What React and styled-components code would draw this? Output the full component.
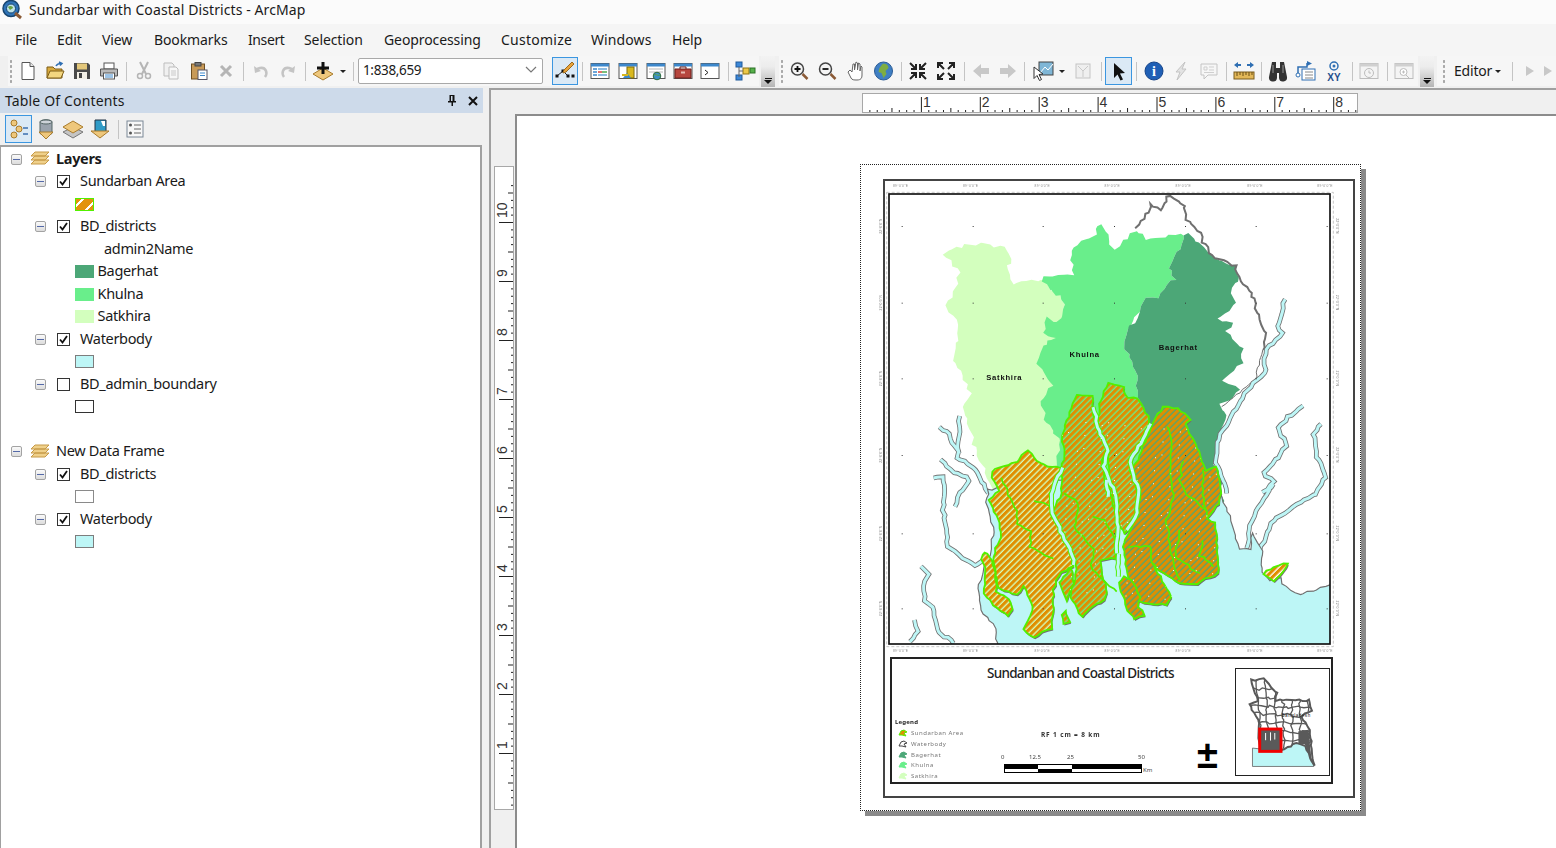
import React from 'react';
import styled, { createGlobalStyle } from 'styled-components';

const GlobalStyle = createGlobalStyle`
  html, body { margin: 0; padding: 0; background: #f0f0f0; }
  * { box-sizing: border-box; }
  body { font-family: "Noto Sans", "Open Sans", "Liberation Sans", sans-serif; color: #1a1a1a; }
`;

const Root = styled.div`
  width: 1556px;
  height: 848px;
  display: flex;
  flex-direction: column;
  overflow: hidden;
  background: #f0f0f0;
`;

const TitleBar = styled.div`
  height: 24px;
  display: flex;
  align-items: center;
  gap: 7px;
  padding: 0 0 5px 2px;
  background: #fbfbfb;
  font-size: 14px;
  letter-spacing: 0.09px;
`;

const MenuBar = styled.div`
  height: 32px;
  display: flex;
  align-items: center;
  padding: 0 0 2px 15px;
  background: #f5f5f5;
  font-size: 14px;
`;

const MenuItem = styled.span`
  width: ${p => p.$w}px;
  letter-spacing: ${p => p.$ls || -0.1}px;
`;

const ToolRow = styled.div`
  height: 32px;
  display: flex;
  align-items: flex-start;
  padding-left: 8px;
  background: #f0f0f0;
`;

const Band = styled.div`
  display: flex;
  align-items: center;
  height: 30px;
  background: #f6f6f6;
  margin-left: ${p => p.$ml || 0}px;
  flex: ${p => (p.$grow ? 1 : 'none')};
`;

const Grip = styled.span`
  width: 6px;
  height: 24px;
  background-image: radial-gradient(circle, #a8a8a8 1.1px, transparent 1.3px);
  background-size: 6px 5px;
  flex: none;
  margin-left: ${p => p.$ml || 0}px;
`;

const ToolBtn = styled.span`
  width: ${p => p.$w || 28}px;
  height: 28px;
  flex: none;
  display: flex;
  align-items: center;
  justify-content: center;
  border: 1px solid ${p => (p.$active ? '#3b96e0' : 'transparent')};
  background: ${p => (p.$active ? '#dbe9f5' : 'transparent')};
`;

const Sep = styled.span`
  width: ${p => p.$w || 6}px;
  height: 24px;
  flex: none;
  position: relative;
  &::after {
    content: '';
    position: absolute;
    left: 50%;
    top: 3px;
    bottom: 2px;
    width: 1px;
    background: #c4c4c4;
  }
`;

const Gap = styled.span`
  width: ${p => p.$w}px;
  flex: none;
`;

const Caret = styled.span`
  width: ${p => p.$w || 10}px;
  flex: none;
  display: flex;
  justify-content: center;
  &::after {
    content: '';
    border-left: 3px solid transparent;
    border-right: 3px solid transparent;
    border-top: 3px solid #222;
  }
`;

const ScaleCombo = styled.div`
  width: 185px;
  height: 26px;
  flex: none;
  margin-right: 9px;
  display: flex;
  align-items: center;
  justify-content: space-between;
  padding: 0 5px 3px 4px;
  background: #fff;
  border: 1px solid #a9a9a9;
  border-radius: 2px;
  font-size: 13.5px;
  letter-spacing: -0.35px;
`;

const Overflow = styled.span`
  width: 14px;
  height: 31px;
  flex: none;
  margin-left: ${p => p.$ml || 0}px;
  display: flex;
  flex-direction: column;
  align-items: center;
  justify-content: flex-end;
  gap: 1px;
  padding-bottom: 3px;
  background: linear-gradient(#f3f3f3, #ececec 35%, #b4b4b4);
  &::before { content: ''; width: 7px; height: 1px; background: #111; }
  &::after {
    content: '';
    border-left: 4px solid transparent;
    border-right: 4px solid transparent;
    border-top: 4px solid #111;
  }
`;

const EditorLabel = styled.span`
  display: flex;
  align-items: center;
  gap: 3px;
  margin-left: 7px;
  padding-bottom: 2px;
  font-size: 14px;
  letter-spacing: -0.2px;
  &::after {
    content: '';
    margin-top: 2px;
    border-left: 3px solid transparent;
    border-right: 3px solid transparent;
    border-top: 3px solid #222;
  }
`;

const Main = styled.div`
  flex: 1;
  display: flex;
  min-height: 0;
`;

const TocPanel = styled.section`
  width: 483px;
  flex: none;
  display: flex;
  flex-direction: column;
`;

const TocHeader = styled.header`
  height: 25px;
  flex: none;
  display: flex;
  align-items: center;
  justify-content: space-between;
  padding: 0 4px 0 5px;
  background: #cddaea;
  font-size: 14px;
  letter-spacing: 0.15px;
`;

const HeaderIcons = styled.span`
  display: flex;
  align-items: center;
  gap: 9px;
`;

const TocTools = styled.div`
  height: 32px;
  flex: none;
  display: flex;
  align-items: center;
  padding-left: 5px;
  background: #f0f0f0;
`;

const Tree = styled.div`
  flex: 1;
  padding-top: 1px;
  margin-right: 1px;
  background: #fff;
  border: 1px solid #a0a0a0;
  border-width: 2px 2px 0 1px;
  font-size: 14.5px;
  letter-spacing: -0.33px;
`;

const Row = styled.div`
  height: 22.5px;
  display: flex;
  align-items: center;
  padding-left: ${p => p.$indent}px;
  font-weight: ${p => (p.$bold ? 700 : 400)};
`;

const RowLabel = styled.span`
  padding-bottom: 3px;
`;

const MinusBox = styled.span`
  width: 11px;
  height: 11px;
  flex: none;
  margin-right: ${p => p.$mr}px;
  display: flex;
  align-items: center;
  justify-content: center;
  border: 1px solid #a3a3a3;
  border-radius: 2px;
  background: linear-gradient(#fafafa, #dcdcdc);
  &::after { content: ''; width: 7px; height: 1px; background: #5469a8; }
`;

const CheckBox = styled.span`
  width: 13px;
  height: 13px;
  flex: none;
  margin-right: 10px;
  display: flex;
  align-items: center;
  justify-content: center;
  border: 1px solid #333;
  background: #fff;
`;

const Swatch = styled.span`
  width: 19px;
  height: 13px;
  flex: none;
  margin-right: 3.5px;
  background: ${p => p.$bg || '#fff'};
  border: ${p => (p.$line ? `1.5px solid ${p.$line}` : 'none')};
  ${p => p.$hatch && `
    background: repeating-linear-gradient(135deg, #e3930c 0 4px, #fff 4px 6px, #e3930c 6px 10px);
  `}
`;

const ViewArea = styled.div`
  flex: 1;
  margin-left: 6px;
  display: grid;
  grid-template-columns: 24px 1fr;
  grid-template-rows: 24px 1fr;
  border: 2px solid #a0a0a0;
  border-width: 2px 0 0 2px;
`;

const HRulerSlot = styled.div`
  grid-column: 2;
  grid-row: 1;
  padding: 3px 0 0 347px;
`;

const VRulerSlot = styled.div`
  grid-column: 1;
  grid-row: 2;
  padding: 52px 0 0 3px;
`;

const Canvas = styled.div`
  grid-column: 2;
  grid-row: 2;
  position: relative;
  background: #fff;
  border: 2px solid #8c8c8c;
  border-width: 2px 0 0 2px;
`;

const Sheet = styled.div`
  position: absolute;
  left: 343px;
  top: 48px;
  width: 501px;
  height: 647px;
  padding: 14px 6px 0 22px;
  background: #fff;
  border: 1px dotted #222;
  box-shadow: 5px 5px 0 #8a8a8a;
`;

const Neatline = styled.div`
  width: 472px;
  height: 619px;
  border: 2px solid #444;
  display: flex;
  flex-direction: column;
`;

const MapDrawing = styled.svg`
  display: block;
  width: 468px;
  height: 474px;
  flex: none;
  overflow: visible;
  filter: blur(0.25px);
`;

const LegendBox = styled.div`
  position: relative;
  width: 443px;
  height: 127px;
  margin: 2px 0 0 5px;
  border: 2px solid #222;
`;

const MapTitle = styled.div`
  position: absolute;
  left: 95px;
  top: 5px;
  font-size: 13.5px;
  font-weight: 500;
  letter-spacing: -0.72px;
  white-space: nowrap;
  color: #222;
`;

const Legend = styled.div`
  position: absolute;
  left: 3px;
  top: 58px;
  display: flex;
  flex-direction: column;
  font-size: 6px;
  color: #777;
  letter-spacing: 0.5px;
  filter: blur(0.25px);
`;

const LegendTitle = styled.b`
  color: #222;
  line-height: 11px;
  font-size: 6px;
  letter-spacing: 0.2px;
`;

const LegendRow = styled.span`
  display: flex;
  align-items: center;
  gap: 3px;
  height: 10.7px;
  padding-left: 3px;
`;

const ScaleText = styled.div`
  position: absolute;
  left: 149px;
  top: 71px;
  font-size: 6.5px;
  font-weight: 700;
  letter-spacing: 0.85px;
  color: #333;
  white-space: nowrap;
  filter: blur(0.2px);
`;

const ScaleLabels = styled.div`
  position: absolute;
  left: 109px;
  top: 94px;
  width: 160px;
  height: 10px;
  font-size: 6px;
  color: #444;
  filter: blur(0.2px);
`;

const ScaleLabel = styled.span`
  position: absolute;
  left: ${p => p.$x}px;
`;

const ScaleBar = styled.div`
  position: absolute;
  left: 112px;
  top: 105px;
  width: 138px;
  height: 9px;
  display: grid;
  grid-template-columns: 33px 34px 69px;
  grid-template-rows: 1fr 1fr;
  border: 1px solid #000;
`;

const BarCell = styled.span`
  background: ${p => (p.$dark ? '#000' : '#fff')};
`;

const KmLabel = styled.span`
  position: absolute;
  left: 251px;
  top: 107px;
  font-size: 6px;
  color: #444;
`;

const NorthArrow = styled.span`
  position: absolute;
  left: 305px;
  top: 76px;
  font-family: "Liberation Sans", sans-serif;
  font-size: 38px;
  line-height: 40px;
  font-weight: 700;
  color: #000;
`;

const Inset = styled.svg`
  position: absolute;
  left: 343px;
  top: 9px;
  width: 95px;
  height: 108px;
  border: 1.5px solid #222;
`;

const HEX = { orange: '#e08e00', green: '#52f000', kh: '#69ee8b', sat: '#d3ffbe', bag: '#4ca777', sea: '#bdf6f6', line: '#707070' };

const Ico = ({ children, w = 20, h = 20, view = '0 0 20 20' }) => (
  <svg width={w} height={h} viewBox={view} style={{ display: 'block', flex: 'none' }}>{children}</svg>
);

const WindowBase = ({ children }) => (
  <>
    <rect x="1" y="2.500" width="18" height="15" fill="#fff" stroke="#555" />
    <rect x="1" y="2.500" width="18" height="3" fill="#3d88cc" />
    {children}
  </>
);

const icons = {
  newDoc: <Ico><path d="M4 1.500h8l4 4v13H4z" fill="#fff" stroke="#555" /><path d="M12 1.500v4h4" fill="#e8e8e8" stroke="#555" /></Ico>,
  open: <Ico><path d="M2 6h6l2 2h7v9H2z" fill="#d9aa3e" stroke="#7d5d16" /><path d="M2 17l3-7h14l-3 7z" fill="#f3d680" stroke="#7d5d16" /><path d="M11 5c1-2 3-2.500 5-2.500M14 1l3 1.500-2 2" fill="none" stroke="#2f6fb3" strokeWidth="1.500" /></Ico>,
  save: <Ico><path d="M2 2h14l2 2v14H2z" fill="#4a4a4a" /><rect x="5" y="2.500" width="10" height="6" fill="#e3c77a" /><rect x="5" y="11" width="10" height="7" fill="#f2efe6" /><rect x="7" y="12" width="3" height="5" fill="#444" /></Ico>,
  print: <Ico><rect x="5" y="2" width="10" height="6" fill="#fff" stroke="#555" /><path d="M1.500 8h17v7h-17z" fill="#b9b9b9" stroke="#555" /><rect x="4.500" y="12" width="11" height="6" fill="#fff" stroke="#555" /><path d="M6 14h8M6 16h8" stroke="#3d88cc" /></Ico>,
  cut: <Ico><path d="M6 1l6 12M14 1L8 13" stroke="#b5b5b5" strokeWidth="2" /><circle cx="6" cy="15" r="2.500" fill="none" stroke="#b5b5b5" strokeWidth="1.500" /><circle cx="14" cy="15" r="2.500" fill="none" stroke="#b5b5b5" strokeWidth="1.500" /></Ico>,
  copy: <Ico><path d="M3 2h8l2 2v11H3z" fill="#f0f0f0" stroke="#bdbdbd" /><path d="M8 6h7l2 2v10H8z" fill="#f7f7f7" stroke="#bdbdbd" /><path d="M10 10h5M10 12h5M10 14h5" stroke="#c9c9c9" /></Ico>,
  paste: <Ico><rect x="2.500" y="3" width="13" height="15" fill="#c89a58" stroke="#6e4f22" /><rect x="6" y="1.500" width="6" height="3.500" fill="#777" stroke="#444" /><rect x="9" y="9" width="9" height="9.500" fill="#fff" stroke="#556" /><path d="M11 12h5M11 14.500h5" stroke="#3d88cc" /></Ico>,
  del: <Ico><path d="M5 5l10 10M15 5L5 15" stroke="#b5b5b5" strokeWidth="3" /></Ico>,
  undo: <Ico><path d="M14 16c3-4 1-10-5-9L6 8" fill="none" stroke="#c4c4c4" strokeWidth="2.500" /><path d="M3 5l1 7 6-2z" fill="#c4c4c4" /></Ico>,
  redo: <Ico><path d="M6 16C3 12 5 6 11 7l3 1" fill="none" stroke="#c4c4c4" strokeWidth="2.500" /><path d="M17 5l-1 7-6-2z" fill="#c4c4c4" /></Ico>,
  addData: <Ico w={22} h={22} view="0 0 22 22"><path d="M11 8l10 6-10 6-10-6z" fill="#eec77c" stroke="#a97c2c" /><path d="M11 2v12M5 8h12" stroke="#111" strokeWidth="3" /></Ico>,
  editTool: <Ico w={22} h={22} view="0 0 22 22"><path d="M3 16l6-5 5 5" stroke="#222" fill="none" /><rect x="1.500" y="14.500" width="3" height="3" fill="#111" /><rect x="7.500" y="9.500" width="3" height="3" fill="#111" /><rect x="12.500" y="14.500" width="3" height="3" fill="#111" /><rect x="17.500" y="14.500" width="3" height="3" fill="#111" /><path d="M10 10l8-8 2 2-8 8-3 1z" fill="#e8a33c" stroke="#9c6a1c" /></Ico>,
  tableWin: <Ico><WindowBase /><path d="M3 8h4M3 11h4M3 14h4" stroke="#3d88cc" strokeWidth="1.500" /><path d="M8 8h9M8 14h9" stroke="#6aa6d8" strokeWidth="1.500" /><path d="M8 11h4" stroke="#d8413c" strokeWidth="1.500" /><path d="M12 11h5" stroke="#4eaa4e" strokeWidth="1.500" /></Ico>,
  catalog: <Ico><WindowBase /><rect x="9" y="6" width="7" height="11" fill="#d9b81e" stroke="#7d6a0c" /><path d="M5 17l4-5 4 5z" fill="#3d88cc" /><path d="M4 14h6" stroke="#d9b81e" strokeWidth="2" /></Ico>,
  searchWin: <Ico><WindowBase><path d="M3 8h14M3 11h14" stroke="#b8b8b8" /><circle cx="11" cy="15" r="3.800" fill="#3d8fc7" stroke="#2d6b3a" /><path d="M8 14c2-1 4 1 6 0" stroke="#62b04a" /></WindowBase></Ico>,
  toolbox: <Ico><WindowBase /><path d="M2 8h16v9H2z" fill="#b6463e" stroke="#6e1e1a" /><path d="M7 8V6h6v2" fill="none" stroke="#6e1e1a" /><rect x="8" y="10.500" width="4" height="2" fill="#e7b9b0" /></Ico>,
  python: <Ico><WindowBase><path d="M5 9l3 2.500L5 14" fill="none" stroke="#222" /></WindowBase></Ico>,
  model: <Ico w={22} h={22} view="0 0 22 22"><rect x="2" y="2" width="6" height="5" fill="#3d88d8" stroke="#1f5a9c" /><rect x="2" y="15" width="6" height="5" fill="#3d88d8" stroke="#1f5a9c" /><rect x="9" y="8" width="6" height="6" fill="#ebc84a" stroke="#8f7315" /><rect x="16" y="8" width="5" height="5" fill="#55b04a" stroke="#2d7026" /><path d="M5 7v10M5 11h4" stroke="#666" /></Ico>,
  zoomIn: <Ico><circle cx="8.500" cy="8" r="6" fill="#f4f4f4" stroke="#444" strokeWidth="1.500" /><path d="M5.500 8h6M8.500 5v6" stroke="#111" strokeWidth="1.800" /><path d="M13.500 13l5 5" stroke="#8a5a36" strokeWidth="2.500" /></Ico>,
  zoomOut: <Ico><circle cx="8.500" cy="8" r="6" fill="#f4f4f4" stroke="#444" strokeWidth="1.500" /><path d="M5.500 8h6" stroke="#111" strokeWidth="1.800" /><path d="M13.500 13l5 5" stroke="#8a5a36" strokeWidth="2.500" /></Ico>,
  pan: <Ico><path d="M3 11l3 6c1 2 3 2 6 2 4 0 5-2 5-5V6l-1-1-1 5V3l-1.500-1-1 7V2L11 1 9.500 9V3L8 3 7 11 5 9z" fill="#fff" stroke="#666" /></Ico>,
  globe: <Ico><circle cx="10.500" cy="10" r="9" fill="#3f7fc4" stroke="#2a5b94" /><path d="M9.500 3c4-1 6 2 6 4l-3 3 1 3-3 4-2-5-3-1 1-4z" fill="#7ead42" /></Ico>,
  fixedIn: <Ico><path d="M2 2l6 6M8 3v5H3M18 2l-6 6M12 3v5h5M2 18l6-6M8 17v-5H3M18 18l-6-6M12 17v-5h5" stroke="#222" strokeWidth="2" fill="none" /></Ico>,
  fixedOut: <Ico><path d="M8 8L2 2M2 7V2h5M12 8l6-6M18 7V2h-5M8 12l-6 6M2 13v5h5M12 12l6 6M18 13v5h-5" stroke="#222" strokeWidth="2" fill="none" /></Ico>,
  back: <Ico><path d="M2 10l8-7v4h8v6h-8v4z" fill="#c8c8c8" /></Ico>,
  fwd: <Ico><path d="M18 10l-8-7v4H2v6h8v4z" fill="#c8c8c8" /></Ico>,
  selectEl: <Ico w={22} h={22} view="0 0 22 22"><rect x="7" y="2" width="14" height="13" fill="#7fb6d6" stroke="#444" /><path d="M8 13l5-6 3 3 5-6" stroke="#fff" fill="none" /><path d="M2 7l9 7-4 .5 2.500 5-2 1-2.500-5-3 3z" fill="#fff" stroke="#333" /></Ico>,
  pale: <Ico w={16} h={16} view="0 0 16 16"><rect x="1" y="1" width="14" height="14" fill="#efefef" stroke="#c4c4c4" /><path d="M3 3l5 5 5-5M8 8v6" stroke="#c9c9c9" fill="none" /></Ico>,
  arrow: <Ico><path d="M5 2l11 10-5 .5 3 6-2.500 1-3-6L5 17z" fill="#111" /></Ico>,
  info: <Ico><circle cx="10" cy="10" r="9" fill="#1f5fb5" stroke="#16458a" /><text x="10" y="15" textAnchor="middle" fontSize="14" fontWeight="700" fontFamily="Liberation Serif, serif" fill="#fff">i</text></Ico>,
  bolt: <Ico><path d="M14 1L5 11h4l-3 8 9-11h-4z" fill="#e3e3e3" stroke="#c4c4c4" /></Ico>,
  popup: <Ico><path d="M2 3h16v11h-9l-4 4v-4H2z" fill="#f6f6f6" stroke="#c4c4c4" /><path d="M5 6h3v3H5zM10 6h5M10 9h5M5 11.500h10" stroke="#cfcfcf" fill="none" /></Ico>,
  measure: <Ico w={22} h={22} view="0 0 22 22"><path d="M1 5l4-3v2h3v2H5v2zM21 5l-4-3v2h-3v2h3v2z" fill="#2f6fb3" /><rect x="1" y="12" width="20" height="7" fill="#e2b758" stroke="#7a5c1c" /><path d="M4 12v4M7 12v3M10 12v4M13 12v3M16 12v4M19 12v3" stroke="#6b4f14" /></Ico>,
  find: <Ico w={22} h={22} view="0 0 22 22"><path d="M5 2h4v6h4V2h4l3 15a3 3 0 0 1-8 1v-5H10v5a3 3 0 0 1-8-1z" fill="#333" /><path d="M6 5v8M16 5v8" stroke="#999" /></Ico>,
  route: <Ico w={22} h={22} view="0 0 22 22"><rect x="7" y="9" width="13" height="11" fill="#fff" stroke="#2f6fb3" /><path d="M10 12h8M10 15h8M10 18h8" stroke="#888" /><path d="M3 14V7h9V3" fill="none" stroke="#2f6fb3" strokeWidth="1.500" /><circle cx="3" cy="15" r="2" fill="#fff" stroke="#2f6fb3" /><path d="M12 1l5 2.500-5 2.500z" fill="#2f6fb3" /></Ico>,
  xy: <Ico w={22} h={22} view="0 0 22 22"><circle cx="11" cy="6" r="4" fill="none" stroke="#2f6fb3" strokeWidth="1.500" /><circle cx="11" cy="6" r="1.500" fill="#2f6fb3" /><text x="11" y="20.500" textAnchor="middle" fontSize="10" fontWeight="700" fontFamily="Liberation Sans, sans-serif" fill="#1f4f8c">XY</text></Ico>,
  time: <Ico><rect x="1" y="2.500" width="18" height="15" fill="#f4f4f4" stroke="#bdbdbd" /><rect x="1" y="2.500" width="18" height="3" fill="#d0d0d0" /><circle cx="10" cy="12" r="4.500" fill="none" stroke="#bdbdbd" /><path d="M10 9.500V12h2" stroke="#bdbdbd" fill="none" /></Ico>,
  viewer: <Ico><rect x="1" y="2.500" width="18" height="15" fill="#f4f4f4" stroke="#bdbdbd" /><rect x="1" y="2.500" width="18" height="3" fill="#d0d0d0" /><circle cx="9.500" cy="11" r="3.500" fill="#fff" stroke="#bdbdbd" /><path d="M8 11h3M9.500 9.500v3M12 14l3 3" stroke="#bdbdbd" /></Ico>,
  play: <Ico w={14} h={14} view="0 0 14 14"><path d="M3 2l8 5-8 5z" fill="#c8c8c8" /></Ico>,
};

const tocIcons = {
  tree: <Ico><circle cx="5" cy="4" r="3" fill="#eec77c" stroke="#a97c2c" /><circle cx="10" cy="10" r="3" fill="#eec77c" stroke="#a97c2c" /><circle cx="5" cy="16" r="3" fill="#eec77c" stroke="#a97c2c" /><path d="M14 9h5M14 15h5" stroke="#3d6fae" strokeWidth="1.500" /></Ico>,
  db: <Ico w={22} h={22} view="0 0 22 22"><path d="M5 4c0-3 12-3 12 0v11c0 3-12 3-12 0z" fill="#9aa3ad" stroke="#566" /><ellipse cx="11" cy="4" rx="6" ry="2" fill="#cdd3d9" stroke="#566" /><path d="M4 14h14l-7 7z" fill="#eec77c" stroke="#a97c2c" /></Ico>,
  stack: <Ico w={22} h={22} view="0 0 22 22"><path d="M11 9l10 5-10 6-10-6z" fill="#c4c4c4" stroke="#777" /><path d="M11 3l10 6-10 6L1 9z" fill="#eec77c" stroke="#a97c2c" /></Ico>,
  source: <Ico w={22} h={22} view="0 0 22 22"><path d="M6 2h11v12H6z" fill="#2f9bc7" stroke="#234" /><path d="M12 3h4v5h-2z" fill="#fff" /><path d="M2 13h18l-9 7z" fill="#eec77c" stroke="#a97c2c" /></Ico>,
  list: <Ico><rect x="2" y="2" width="16" height="16" fill="#f7f7f7" stroke="#7a8796" /><circle cx="5.500" cy="6" r="1.500" fill="#555" /><circle cx="5.500" cy="14" r="1.500" fill="#555" /><path d="M9 6h7M9 10h7M9 14h7" stroke="#666" /></Ico>,
};

const LayersIcon = () => (
  <Ico view="0 0 20 16" h={16} w={20}>
    <path d="M5 1h14l-4 4H1zM5 5h14l-4 4H1zM5 9h14l-4 4H1z" fill="#efd08a" stroke="#c69a48" />
  </Ico>
);

const tools1 = [
  ['b', 'newDoc', 27], ['b', 'open', 27], ['b', 'save', 27], ['b', 'print', 27], ['s', 8],
  ['b', 'cut', 27], ['b', 'copy', 28], ['b', 'paste', 27], ['b', 'del', 27], ['s', 8],
  ['b', 'undo', 27], ['b', 'redo', 28], ['s', 6], ['b', 'addData', 30], ['c', 10], ['s', 10],
];
const tools2 = [
  ['a', 'editTool', 26], ['s', 8], ['b', 'tableWin', 28], ['b', 'catalog', 28], ['b', 'searchWin', 27],
  ['b', 'toolbox', 27], ['b', 'python', 28], ['s', 7], ['b', 'model', 28],
];
const tools3 = [
  ['b', 'zoomIn', 28], ['b', 'zoomOut', 28], ['b', 'pan', 28], ['b', 'globe', 28], ['s', 7],
  ['b', 'fixedIn', 28], ['b', 'fixedOut', 28], ['s', 7], ['b', 'back', 27], ['b', 'fwd', 27], ['s', 6],
  ['b', 'selectEl', 32], ['c', 6], ['g', 4], ['b', 'pale', 28], ['s', 8], ['a', 'arrow', 27], ['s', 8],
  ['b', 'info', 27], ['b', 'bolt', 28], ['b', 'popup', 27], ['s', 8], ['b', 'measure', 28], ['s', 6],
  ['b', 'find', 28], ['b', 'route', 28], ['b', 'xy', 28], ['s', 7], ['b', 'time', 28], ['s', 7], ['b', 'viewer', 28],
];

const renderTools = list => list.map((t, i) => {
  if (t[0] === 's') return <Sep key={i} $w={t[1]} />;
  if (t[0] === 'c') return <Caret key={i} $w={t[1]} />;
  if (t[0] === 'g') return <Gap key={i} $w={t[1]} />;
  return <ToolBtn key={i} $w={t[2]} $active={t[0] === 'a'}>{icons[t[1]]}</ToolBtn>;
});

const Tick = () => (
  <svg width="11" height="11" viewBox="0 0 11 11"><path d="M2 5.500l2.500 3L9 2" fill="none" stroke="#111" strokeWidth="1.800" /></svg>
);

const Layer = ({ name, on = true }) => (
  <Row $indent={34}>
    <MinusBox $mr={11} />
    <CheckBox>{on && <Tick />}</CheckBox>
    <RowLabel>{name}</RowLabel>
  </Row>
);

const Frame = ({ name, bold }) => (
  <Row $indent={10} $bold={bold}>
    <MinusBox $mr={8} />
    <LayersIcon />
    <Gap $w={6} />
    <RowLabel>{name}</RowLabel>
  </Row>
);

const HRuler = () => {
  const step = 58.9 / 8;
  return (
    <svg width="496" height="20" style={{ display: 'block', background: '#fff', border: '1px solid #a8a8a8' }}>
      {Array.from({ length: 68 }, (_, i) => {
        const x = i * step - 1;
        const h = i % 8 === 0 ? 15 : i % 4 === 0 ? 4 : 2;
        return <rect key={i} x={x} y={18 - h} width="1" height={h} fill="#222" />;
      })}
      {[1, 2, 3, 4, 5, 6, 7, 8].map(n => (
        <text key={n} x={n * 58.9 + 1} y="13" fontSize="14" fontFamily="Liberation Sans, sans-serif" fill="#333">{n}</text>
      ))}
    </svg>
  );
};

const VRuler = () => {
  const step = 59 / 8;
  const zero = 645;
  return (
    <svg width="20" height="644" style={{ display: 'block', background: '#fff', border: '1px solid #a8a8a8' }}>
      {Array.from({ length: 86 }, (_, i) => {
        const y = zero - i * step;
        const w = i % 8 === 0 ? 14 : i % 4 === 0 ? 5 : 2;
        return <rect key={i} x={18 - w} y={y} width={w} height="1" fill="#222" />;
      })}
      {[1, 2, 3, 4, 5, 6, 7, 8, 9, 10].map(n => {
        const y = zero - n * 59 - 4;
        return <text key={n} transform={`translate(12 ${y}) rotate(-90)`} fontSize="14" fontFamily="Liberation Sans, sans-serif" fill="#333">{n}</text>;
      })}
    </svg>
  );
};

// roughens a point list so coasts read as jagged raster edges
const noise = (x, y) => {
  const v = Math.sin(x * 12.9898 + y * 78.233) * 43758.5453;
  return v - Math.floor(v) - 0.5;
};

const jag = (pts, amp = 5, step = 15, closed = true) => {
  const list = pts.trim().split(/\s+/).map(p => p.split(',').map(Number));
  const out = [];
  const count = closed ? list.length : list.length - 1;
  for (let i = 0; i < count; i++) {
    const [ax, ay] = list[i];
    const [bx, by] = list[(i + 1) % list.length];
    const n = Math.max(1, Math.round(Math.hypot(bx - ax, by - ay) / step));
    for (let k = 0; k < n; k++) {
      const x = ax + ((bx - ax) * k) / n;
      const y = ay + ((by - ay) * k) / n;
      out.push(`${(x + noise(x, y) * amp * 2).toFixed(1)},${(y + noise(y, x) * amp * 2).toFixed(1)}`);
    }
  }
  if (!closed) out.push(list[list.length - 1].join(','));
  return out.join(' ');
};

// map outlines, in 3x pixels from the sheet corner
const P = {
  sat: '250,280 330,250 430,260 455,295 440,330 460,375 545,355 600,410 615,450 600,700 620,960 400,1000 360,900 340,850 310,740 332,700 280,600 300,490 262,440 300,340',
  khu: '710,195 730,195 750,255 770,265 825,210 855,235 975,225 930,320 945,355 890,410 860,410 835,460 800,510 790,560 825,620 840,740 870,790 880,1000 610,1000 590,900 605,840 565,800 540,720 575,680 535,610 545,560 590,530 550,520 560,470 590,490 615,450 600,410 545,370 550,350 640,345 630,270 680,240 705,225',
  bag: '990,220 1060,295 1125,320 1140,350 1110,400 1125,430 1070,475 1120,490 1100,515 1150,570 1145,610 1090,660 1135,690 1110,725 1080,735 1095,770 1070,850 1060,910 1085,960 1090,1040 1060,1080 880,1100 870,790 840,740 825,620 790,560 800,510 830,480 835,460 860,410 890,410 945,355 930,320 975,225',
  sea: '415,1480 405,1405 365,1350 352,1285 375,1220 395,1170 400,1100 380,1030 385,990 600,960 1080,1000 1090,1030 1110,1070 1135,1165 1172,1165 1175,1120 1210,1170 1205,1240 1230,1260 1260,1255 1265,1275 1320,1305 1408,1275 1440,1275 1440,1480',
};

const hatched = [
  { base: HEX.sat, pts: '395,935 470,905 505,870 540,912 605,925 570,1000 590,1080 640,1190 640,1220 595,1245 580,1290 578,1370 575,1405 520,1432 492,1410 520,1340 492,1280 470,1305 415,1285 400,1190 420,1130 420,1090 385,1020 420,990 395,950' },
  { base: HEX.sat, pts: '375,1175 385,1180 405,1240 410,1295 445,1315 458,1350 445,1370 410,1345 370,1300 378,1240 365,1195' },
  { base: HEX.kh, pts: '650,705 695,710 705,790 745,870 728,900 735,960 770,1040 775,1130 768,1195 720,1200 740,1300 735,1320 690,1345 665,1370 630,1310 650,1230 635,1180 575,1060 605,1000 605,925 615,870 605,830 625,770' },
  { base: HEX.kh, pts: '745,670 790,680 800,715 835,715 865,770 870,800 840,860 810,905 835,1000 830,1070 795,1120 775,1090 750,1000 745,880 712,800 720,720' },
  { base: HEX.kh, pts: '610,1250 635,1225 640,1270 620,1320 600,1270' },
  { base: HEX.kh, pts: '615,1350 630,1385 610,1390 605,1365' },
  { base: HEX.bag, pts: '885,770 910,740 955,745 990,780 975,795 1005,850 1035,930 1070,920 1085,1000 1075,1030 1060,1050 1040,1075 1065,1090 1075,1200 1075,1240 1010,1270 990,1270 960,1270 895,1230 880,1215 935,1310 920,1335 840,1325 800,1240 795,1200 790,1150 810,1110 835,1060 840,1000 810,930 835,900 860,830' },
  { base: HEX.bag, pts: '790,1250 815,1260 840,1310 835,1340 855,1365 825,1375 800,1350 795,1320 775,1270' },
  { base: '#fff', pts: '1210,1240 1240,1220 1285,1208 1260,1250 1240,1262' },
];

const channels = [
  '420,955 440,990 470,1055 470,1090 510,1110 510,1160 580,1195',
  '520,1020 580,1040 575,1075',
  '610,1000 650,1020 655,1060 640,1100 700,1165 695,1230 770,1295',
  '700,1070 735,1080 770,1145',
  '925,800 935,870 930,930 940,1000 920,1080 935,1190 960,1260',
  '1030,930 1030,1020 1040,1070',
  '970,900 960,960 980,1000 1040,1050',
  '800,1160 870,1160 880,1215',
  '960,1110 945,1190 1020,1240',
  '1030,1140 1020,1185 1060,1220',
];

// tidal rivers that cut through the hatched land, green banks on both sides
const innerRivers = [
  '702,740 712,800 745,870 732,920 770,1010 772,1100 770,1180',
  '872,790 835,860 808,905 835,990 832,1060 800,1110',
  '606,925 572,1000 578,1060 640,1190 640,1215',
  '738,960 745,1010',
  '775,1180 775,1250',
];

const rivers = [
  '300,770 295,860 290,890 350,930 385,1000',
  '240,800 265,825 298,880',
  '245,895 270,930 330,960 300,1000 285,1040',
  '220,955 250,950 255,1000 250,1050 265,1160 345,1220 380,1190',
  '1275,420 1250,500 1270,520 1215,570 1215,640 1180,670 1110,770 1070,850 1070,905 1100,1000',
  '1325,735 1255,800 1280,860 1260,880 1210,940 1240,965 1210,1000 1240,970 1175,1080 1160,1165',
  '1385,790 1360,820 1370,890 1395,950 1370,1000 1240,1080 1200,1170',
  '185,1220 205,1240 190,1280 195,1320 215,1340 240,1420 280,1450',
  '165,1380 175,1410 150,1445',
];

const boundary = '830,205 855,165 875,130 900,150 920,110 935,105 970,135 980,175 1015,210 1030,245 1065,295 1125,320 1145,365 1185,420 1195,480 1220,520 1210,570';

const columns = [122, 332, 547, 757, 970, 1185, 1395];
const rowsY = [198, 428, 655, 885, 1120, 1345];
const dotX = [125, 338, 548, 762, 975, 1187, 1400];

// white flecks scattered across the hatched land
const flecks = Array.from({ length: 150 }, (_, i) => {
  const a = (i * 7919 + 13) % 761;
  const b = (i * 104729 + 7) % 733;
  return [600 + a * 0.62, 780 + b * 0.75];
});

const MapSheet = () => (
  <MapDrawing viewBox="75 63 1404 1422">
    <defs>
      <pattern id="hatch" patternUnits="userSpaceOnUse" width="13.500" height="13.500" patternTransform="rotate(-45)">
        <rect width="13.500" height="9.500" fill={HEX.orange} />
      </pattern>
      <clipPath id="frameClip"><rect x="87" y="102" width="1323" height="1350" /></clipPath>
      <clipPath id="landClip">{hatched.slice(2, 8).map((h, i) => <polygon key={i} points={h.pts} />)}</clipPath>
    </defs>
    <rect x="80" y="97" width="1340" height="1363" fill="none" stroke="#aaa" strokeWidth="2" strokeDasharray="9 6" />
    {columns.map(x => (
      <g key={x} fontSize="10" fill="#8a8a8a" fontFamily="Liberation Sans, sans-serif" textAnchor="middle" letterSpacing="1">
        <text x={x} y="81">89°0'0"E</text>
        <text x={x} y="1476">89°0'0"E</text>
      </g>
    ))}
    {rowsY.map(y => (
      <g key={y} fontSize="10" fill="#8a8a8a" fontFamily="Liberation Sans, sans-serif" textAnchor="middle" letterSpacing="1">
        <text transform={`translate(66 ${y}) rotate(-90)`}>22°0'0"N</text>
        <text transform={`translate(1428 ${y}) rotate(90)`}>22°0'0"N</text>
      </g>
    ))}
    <rect x="87" y="102" width="1323" height="1350" fill="#fff" />
    <g clipPath="url(#frameClip)">
      <polygon points={jag(P.sat, 6)} fill={HEX.sat} />
      <polygon points={jag(P.khu, 6)} fill={HEX.kh} />
      <polygon points={jag(P.bag, 6)} fill={HEX.bag} />
      <polyline points={jag(boundary, 5, 12, false)} fill="none" stroke={HEX.line} strokeWidth="6" />
      <polyline points={jag('1210,570 1185,660 1085,740', 3, 12, false)} fill="none" stroke={HEX.line} strokeWidth="3" />
      {rivers.map(r => <polyline key={r} points={jag(r, 4, 14, false)} fill="none" stroke={HEX.line} strokeWidth="14" />)}
      {rivers.map(r => <polyline key={r} points={jag(r, 4, 14, false)} fill="none" stroke={HEX.sea} strokeWidth="9" />)}
      <polygon points={jag(P.sea, 4, 14)} fill={HEX.sea} stroke={HEX.line} strokeWidth="3.500" />
      {hatched.map(h => <polygon key={h.pts} points={jag(h.pts, 3, 14)} fill={HEX.line} transform="translate(3 5)" />)}
      {hatched.map(h => (
        <g key={h.pts}>
          <polygon points={jag(h.pts, 3, 14)} fill={h.base} />
          <polygon points={jag(h.pts, 3, 14)} fill="url(#hatch)" stroke={HEX.green} strokeWidth="5.500" />
        </g>
      ))}
      {channels.map(c => <polyline key={c} points={jag(c, 4, 14, false)} fill="none" stroke={HEX.green} strokeWidth="5" />)}
      {innerRivers.map(r => <polyline key={r} points={jag(r, 3, 14, false)} fill="none" stroke={HEX.green} strokeWidth="15" />)}
      {innerRivers.map(r => <polyline key={r} points={jag(r, 3, 14, false)} fill="none" stroke={HEX.sea} strokeWidth="9" />)}
      <g clipPath="url(#landClip)">
        {flecks.map(([x, y], i) => <rect key={i} x={x} y={y} width="3" height="3" fill="#fff" />)}
      </g>
      {dotX.flatMap(x => rowsY.map(y => <rect key={`${x}-${y}`} x={x} y={y} width="3" height="3" fill="#333" />))}
      <g fontFamily="Liberation Sans, sans-serif" fontWeight="700" fontSize="23" letterSpacing="2.200" fill="#111" textAnchor="middle">
        <text x="433" y="659">Satkhira</text>
        <text x="674" y="591">Khulna</text>
        <text x="955" y="569">Bagerhat</text>
      </g>
    </g>
    <rect x="87" y="102" width="1323" height="1350" fill="none" stroke="#111" strokeWidth="5" />
  </MapDrawing>
);

const legendItems = [
  ['Sundarban Area', HEX.orange, HEX.green],
  ['Waterbody', '#fff', '#444'],
  ['Bagerhat', HEX.bag, HEX.bag],
  ['Khulna', HEX.kh, HEX.kh],
  ['Satkhira', HEX.sat, HEX.sat],
];

const LegendBlob = ({ fill, line }) => (
  <svg width="10" height="8" viewBox="0 0 10 8"><path d="M1 6l2-4 3-1 3 2-3 1 2 3-4-1z" fill={fill} stroke={line} /></svg>
);

const insetBody = '1110,90 1150,85 1190,130 1185,150 1290,150 1295,180 1262,200 1290,240 1302,350 1275,290 1250,280 1200,302 1135,300 1135,222 1105,160 1130,150 1120,115';

const InsetMap = () => (
  <Inset viewBox="1065 55 283 323">
    <defs><clipPath id="bdClip"><polygon points={insetBody} /></clipPath></defs>
    <polygon points="1115,296 1200,305 1250,280 1285,290 1302,352 1115,352" fill={HEX.sea} stroke="#666" strokeWidth="2.500" />
    <polygon points={jag(insetBody, 3, 12)} fill="#fff" stroke="#595959" strokeWidth="6" />
    <g clipPath="url(#bdClip)">
      {[115, 140, 165, 190, 215, 240, 265].map(y => (
        <polyline key={y} points={jag(`1100,${y} 1310,${y + 10}`, 5, 12, false)} fill="none" stroke="#595959" strokeWidth="4" />
      ))}
      {[1130, 1155, 1180, 1205, 1230, 1255, 1280].map(x => (
        <polyline key={x} points={jag(`${x},80 ${x + 10},310`, 5, 12, false)} fill="none" stroke="#595959" strokeWidth="4" />
      ))}
      <polygon points="1255,245 1285,240 1296,340 1275,285 1255,282" fill="#5a5a5a" />
    </g>
    <text x="1248" y="201" fontSize="14" letterSpacing="1.500" textAnchor="middle" fontFamily="Liberation Sans, sans-serif" fill="#222">Bangladesh</text>
    <rect x="1139" y="240" width="60" height="62" fill="#5a5a5a" />
    <path d="M1155 250v22M1170 248v25M1183 250v20" stroke="#fff" strokeWidth="3" />
    <rect x="1137" y="238" width="65" height="68" fill="none" stroke="#f00000" strokeWidth="9" />
  </Inset>
);

export default function App() {
  return (
    <Root>
      <GlobalStyle />
      <TitleBar>
        <Ico>
          <circle cx="9" cy="8.500" r="8" fill="#2f74b8" stroke="#17456f" strokeWidth="1.500" />
          <circle cx="9" cy="8.500" r="4.500" fill="#bfe3e8" stroke="#17456f" />
          <path d="M6 7c2-2 5-1 5 1l-3 2z" fill="#68a344" />
          <path d="M13 13l6 5" stroke="#8a5a36" strokeWidth="3" />
        </Ico>
        Sundarbar with Coastal Districts - ArcMap
      </TitleBar>
      <MenuBar>
        <MenuItem $w={42}>File</MenuItem>
        <MenuItem $w={45}>Edit</MenuItem>
        <MenuItem $w={52}>View</MenuItem>
        <MenuItem $w={94}>Bookmarks</MenuItem>
        <MenuItem $w={56} $ls={-0.4}>Insert</MenuItem>
        <MenuItem $w={80}>Selection</MenuItem>
        <MenuItem $w={117}>Geoprocessing</MenuItem>
        <MenuItem $w={90} $ls={0.25}>Customize</MenuItem>
        <MenuItem $w={81} $ls={0.1}>Windows</MenuItem>
        <MenuItem $w={40}>Help</MenuItem>
      </MenuBar>
      <ToolRow>
        <Band>
          <Grip />
          {renderTools(tools1)}
          <ScaleCombo>
            1:838,659
            <svg width="12" height="8" viewBox="0 0 12 8"><path d="M1 1l5 5 5-5" fill="none" stroke="#777" strokeWidth="1.200" /></svg>
          </ScaleCombo>
          {renderTools(tools2)}
        </Band>
        <Overflow $ml={2} />
        <Band $ml={4}>
          <Grip />
          {renderTools(tools3)}
        </Band>
        <Overflow $ml={2} />
        <Band $ml={3} $grow>
          <Grip $ml={4} />
          <EditorLabel>Editor</EditorLabel>
          <Sep $w={22} />
          <ToolBtn $w={14}>{icons.play}</ToolBtn>
          <ToolBtn $w={22}>{icons.play}</ToolBtn>
        </Band>
      </ToolRow>
      <Main>
        <TocPanel>
          <TocHeader>
            Table Of Contents
            <HeaderIcons>
              <svg width="12" height="13" viewBox="0 0 12 13"><path d="M3.500 1h5v6h1.500v1.500H7V12H5.500V8.500H2V7h1.500z M5 2v5h1.500V2z" fill="#111" fillRule="evenodd" /></svg>
              <svg width="12" height="12" viewBox="0 0 12 12"><path d="M2 2l8 8M10 2l-8 8" stroke="#111" strokeWidth="2" /></svg>
            </HeaderIcons>
          </TocHeader>
          <TocTools>
            <ToolBtn $w={27} $active>{tocIcons.tree}</ToolBtn>
            <ToolBtn $w={27}>{tocIcons.db}</ToolBtn>
            <ToolBtn $w={27}>{tocIcons.stack}</ToolBtn>
            <ToolBtn $w={28}>{tocIcons.source}</ToolBtn>
            <Sep $w={7} />
            <ToolBtn $w={28}>{tocIcons.list}</ToolBtn>
          </TocTools>
          <Tree>
            <Frame name="Layers" bold />
            <Layer name="Sundarban Area" />
            <Row $indent={74}><Swatch $hatch $line={HEX.green} /></Row>
            <Layer name="BD_districts" />
            <Row $indent={103}><RowLabel>admin2Name</RowLabel></Row>
            <Row $indent={74}><Swatch $bg={HEX.bag} /><RowLabel>Bagerhat</RowLabel></Row>
            <Row $indent={74}><Swatch $bg={HEX.kh} /><RowLabel>Khulna</RowLabel></Row>
            <Row $indent={74}><Swatch $bg={HEX.sat} /><RowLabel>Satkhira</RowLabel></Row>
            <Layer name="Waterbody" />
            <Row $indent={74}><Swatch $bg={HEX.sea} $line="#7d7d7d" /></Row>
            <Layer name="BD_admin_boundary" on={false} />
            <Row $indent={74}><Swatch $line="#333" /></Row>
            <Row $indent={74} />
            <Frame name="New Data Frame" />
            <Layer name="BD_districts" />
            <Row $indent={74}><Swatch $line="#8a8a8a" /></Row>
            <Layer name="Waterbody" />
            <Row $indent={74}><Swatch $bg={HEX.sea} $line="#7d7d7d" /></Row>
          </Tree>
        </TocPanel>
        <ViewArea>
          <HRulerSlot><HRuler /></HRulerSlot>
          <VRulerSlot><VRuler /></VRulerSlot>
          <Canvas>
            <Sheet>
              <Neatline>
                <MapSheet />
                <LegendBox>
                  <MapTitle>Sundanban and Coastal Districts</MapTitle>
                  <Legend>
                    <LegendTitle>Legend</LegendTitle>
                    {legendItems.map(([label, fill, line]) => (
                      <LegendRow key={label}><LegendBlob fill={fill} line={line} />{label}</LegendRow>
                    ))}
                  </Legend>
                  <ScaleText>RF  1 cm = 8 km</ScaleText>
                  <ScaleLabels>
                    <ScaleLabel $x={0}>0</ScaleLabel>
                    <ScaleLabel $x={28}>12.5</ScaleLabel>
                    <ScaleLabel $x={66}>25</ScaleLabel>
                    <ScaleLabel $x={137}>50</ScaleLabel>
                  </ScaleLabels>
                  <ScaleBar>
                    <BarCell $dark /><BarCell /><BarCell $dark />
                    <BarCell /><BarCell $dark /><BarCell />
                  </ScaleBar>
                  <KmLabel>Km</KmLabel>
                  <NorthArrow>±</NorthArrow>
                  <InsetMap />
                </LegendBox>
              </Neatline>
            </Sheet>
          </Canvas>
        </ViewArea>
      </Main>
    </Root>
  );
}
